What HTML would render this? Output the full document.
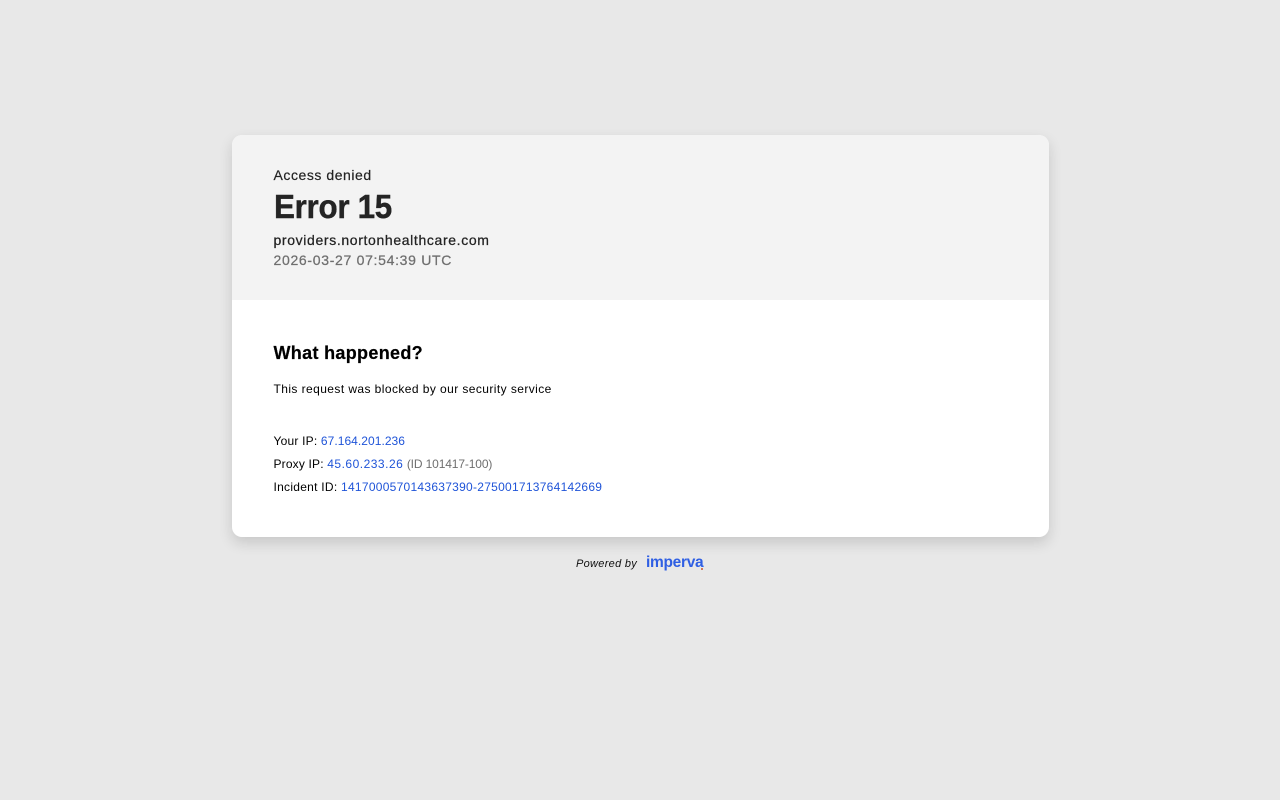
<!DOCTYPE html>
<html lang="en">
<head>
<meta charset="utf-8">
<title>Access denied</title>
<style>
html,body{margin:0;padding:0;width:1280px;height:800px;overflow:hidden;background:#e8e8e8;font-family:"Liberation Sans",Arial,sans-serif}
#card{position:absolute;left:232px;top:135px;width:817px;height:402px;background:#fff;border-radius:10px;box-shadow:0 6px 14px rgba(0,0,0,.14);overflow:hidden}
#head{position:absolute;left:0;top:0;width:817px;height:165px;background:#f3f3f3}
.t{position:absolute;white-space:nowrap;margin:0;font-weight:normal}
a{color:#1f54d8;text-decoration:none}
.g{color:#6f6f6f}
</style>
</head>
<body>
<div id="card"><div id="head"></div></div>
<div class="t" style="left:273.5px;top:166px;font-size:14px;line-height:18px;color:#222;letter-spacing:.55px;-webkit-text-stroke:.2px #222">Access denied</div>
<h1 class="t" style="left:273.5px;top:187px;font-size:33px;line-height:40px;font-weight:bold;color:#242424;letter-spacing:-.3px;-webkit-text-stroke:.4px #242424;transform:scaleX(.95);transform-origin:0 0">Error 15</h1>
<div class="t" style="left:273.5px;top:231px;font-size:14px;line-height:18px;color:#222;letter-spacing:.64px;-webkit-text-stroke:.25px #222">providers.nortonhealthcare.com</div>
<div class="t" style="left:273.5px;top:251px;font-size:14px;line-height:18px;color:#6f6f6f;letter-spacing:.69px;-webkit-text-stroke:.25px #6f6f6f">2026-03-27 07:54:39 UTC</div>
<h2 class="t" style="left:273.5px;top:342px;font-size:18px;line-height:22px;font-weight:bold;color:#000;letter-spacing:.32px;-webkit-text-stroke:.2px #000">What happened?</h2>
<div class="t" style="left:273.5px;top:382px;font-size:12px;line-height:15px;color:#000;letter-spacing:.42px">This request was blocked by our security service</div>
<div class="t" style="left:273.5px;top:434px;font-size:12px;line-height:15px;color:#000;letter-spacing:.2px">Your IP: <a href="#" style="letter-spacing:.05px">67.164.201.236</a></div>
<div class="t" style="left:273.5px;top:457px;font-size:12px;line-height:15px;color:#000;letter-spacing:.17px">Proxy IP: <a href="#" style="letter-spacing:.5px">45.60.233.26</a> <span class="g" style="letter-spacing:-.13px">(ID 101417-100)</span></div>
<div class="t" style="left:273.5px;top:480px;font-size:12px;line-height:15px;color:#000;letter-spacing:.27px">Incident ID: <a href="#">1417000570143637390-275001713764142669</a></div>
<div class="t" style="left:576px;top:557px;font-size:11px;line-height:14px;font-style:italic;color:#111;letter-spacing:.3px">Powered by</div>
<div class="t" style="left:646px;top:553px;font-size:15.5px;line-height:19px;font-weight:bold;color:#2f5fe3;letter-spacing:-.3px">imperva</div>
<div style="position:absolute;left:701px;top:568px;width:2px;height:2px;background:#c9542f;border-radius:50%"></div>
</body>
</html>
